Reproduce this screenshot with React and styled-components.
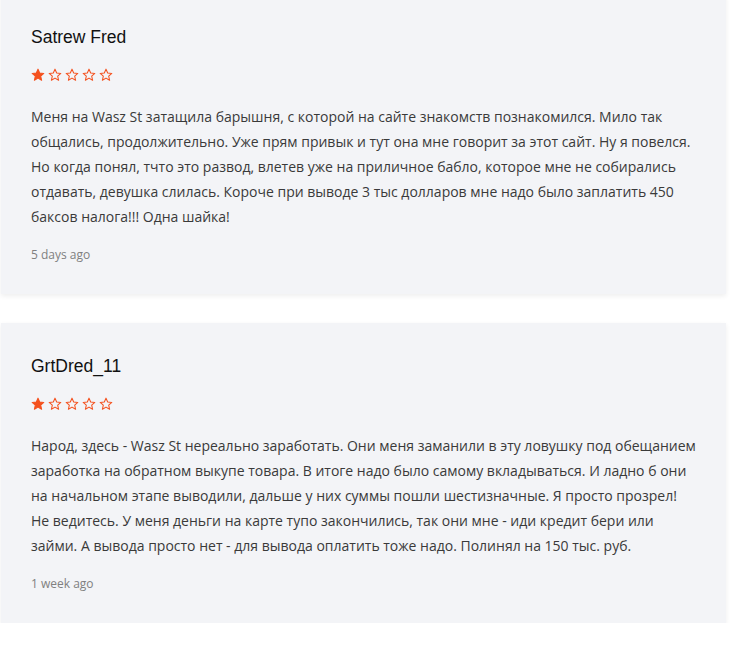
import React from "react";
import styled, { createGlobalStyle } from "styled-components";

const Global = createGlobalStyle`
  html, body { margin: 0; padding: 0; background: #ffffff; }
  body { font-family: "Open Sans", "Liberation Sans", sans-serif; }
`;

const List = styled.div`
  display: flex;
  flex-direction: column;
  gap: 29px;
  margin-top: -6px;
  padding-left: 1px;
  width: 725px;
`;

const Card = styled.article`
  background: #f3f4f7;
  box-shadow: 0 2px 5px rgba(0, 0, 0, 0.07);
  padding: 30px 30px 28px;
  height: 300px;
  box-sizing: border-box;
  display: flex;
  flex-direction: column;
`;

const Name = styled.h3`
  margin: 0;
  font-family: "Liberation Sans", Arial, sans-serif;
  font-weight: 400;
  font-size: 17.5px;
  line-height: 26px;
  color: #111;
`;

const Stars = styled.div`
  display: flex;
  gap: 3px;
  margin-top: 18px;
  height: 14px;
`;

const Body = styled.p`
  margin: 22px 0 0;
  font-size: 14px;
  line-height: 25px;
  color: #3a3a3a;
`;

const Date = styled.div`
  margin-top: 17px;
  font-size: 12px;
  line-height: 18px;
  color: #808080;
`;

const Star = ({ filled }) => (
  <svg width="14" height="14" viewBox="0 0 24 24">
    <polygon
      points="12,2 14.9,8.6 22,9.3 16.6,14 18.2,21 12,17.3 5.8,21 7.4,14 2,9.3 9.1,8.6"
      fill={filled ? "#f4511e" : "none"}
      stroke="#f4511e"
      strokeWidth="1.8"
      strokeLinejoin="round"
    />
  </svg>
);

const reviews = [
  {
    name: "Satrew Fred",
    rating: 1,
    text: "Меня на Wasz St затащила барышня, с которой на сайте знакомств познакомился. Мило так общались, продолжительно. Уже прям привык и тут она мне говорит за этот сайт. Ну я повелся. Но когда понял, тчто это развод, влетев уже на приличное бабло, которое мне не собирались отдавать, девушка слилась. Короче при выводе 3 тыс долларов мне надо было заплатить 450 баксов налога!!! Одна шайка!",
    date: "5 days ago",
  },
  {
    name: "GrtDred_11",
    rating: 1,
    text: "Народ, здесь - Wasz St нереально заработать. Они меня заманили в эту ловушку под обещанием заработка на обратном выкупе товара. В итоге надо было самому вкладываться. И ладно б они на начальном этапе выводили, дальше у них суммы пошли шестизначные. Я просто прозрел! Не ведитесь. У меня деньги на карте тупо закончились, так они мне - иди кредит бери или займи. А вывода просто нет - для вывода оплатить тоже надо. Полинял на 150 тыс. руб.",
    date: "1 week ago",
  },
];

export default function App() {
  return (
    <>
      <Global />
      <List>
        {reviews.map((r) => (
          <Card key={r.name}>
            <Name>{r.name}</Name>
            <Stars>
              {[0, 1, 2, 3, 4].map((i) => (
                <Star key={i} filled={i < r.rating} />
              ))}
            </Stars>
            <Body>{r.text}</Body>
            <Date>{r.date}</Date>
          </Card>
        ))}
      </List>
    </>
  );
}
